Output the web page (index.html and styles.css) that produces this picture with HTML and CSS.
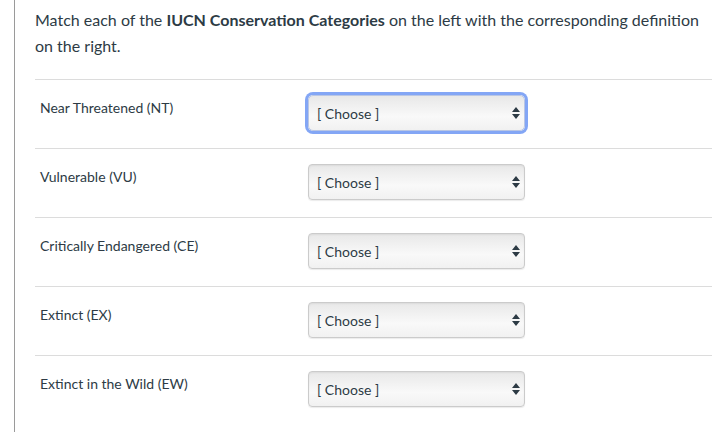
FILE: index.html
```html
<!DOCTYPE html>
<html lang="en">
<head>
    <meta charset="UTF-8">
    <meta name="viewport" content="width=device-width, initial-scale=1.0">
    <title>Quiz - Matching</title>
    <link rel="stylesheet" href="styles.css">
</head>
<body>

    <div class="question">
        <p class="question-text">Match each of the <strong>IUCN Conservation Categories</strong> on the left with the corresponding definition on the right.</p>

        <div class="answers">
            <div class="match-row">
                <div class="match-label">Near Threatened (NT)</div>
                <div class="select-wrap">
                    <select class="match-select is-focused">
                        <option>[ Choose ]</option>
                    </select>
                    <svg class="select-arrows" width="8" height="12" viewBox="0 0 8 12">
                        <path d="M4 0 L8 5 H0 Z M0 7 H8 L4 12 Z" fill="#2d3b45"/>
                    </svg>
                </div>
            </div>

            <div class="match-row">
                <div class="match-label">Vulnerable (VU)</div>
                <div class="select-wrap">
                    <select class="match-select">
                        <option>[ Choose ]</option>
                    </select>
                    <svg class="select-arrows" width="8" height="12" viewBox="0 0 8 12">
                        <path d="M4 0 L8 5 H0 Z M0 7 H8 L4 12 Z" fill="#2d3b45"/>
                    </svg>
                </div>
            </div>

            <div class="match-row">
                <div class="match-label">Critically Endangered (CE)</div>
                <div class="select-wrap">
                    <select class="match-select">
                        <option>[ Choose ]</option>
                    </select>
                    <svg class="select-arrows" width="8" height="12" viewBox="0 0 8 12">
                        <path d="M4 0 L8 5 H0 Z M0 7 H8 L4 12 Z" fill="#2d3b45"/>
                    </svg>
                </div>
            </div>

            <div class="match-row">
                <div class="match-label">Extinct (EX)</div>
                <div class="select-wrap">
                    <select class="match-select">
                        <option>[ Choose ]</option>
                    </select>
                    <svg class="select-arrows" width="8" height="12" viewBox="0 0 8 12">
                        <path d="M4 0 L8 5 H0 Z M0 7 H8 L4 12 Z" fill="#2d3b45"/>
                    </svg>
                </div>
            </div>

            <div class="match-row">
                <div class="match-label">Extinct in the Wild (EW)</div>
                <div class="select-wrap">
                    <select class="match-select">
                        <option>[ Choose ]</option>
                    </select>
                    <svg class="select-arrows" width="8" height="12" viewBox="0 0 8 12">
                        <path d="M4 0 L8 5 H0 Z M0 7 H8 L4 12 Z" fill="#2d3b45"/>
                    </svg>
                </div>
            </div>
        </div>
    </div>

</body>
</html>
```

FILE: styles.css
```css
:root {
    --text-dark: #2d3b45;
    --divider: #dcdcdc;
    --rail: #9a9a9a;
    --focus: #83a6f5;
}

* {
    box-sizing: border-box;
    margin: 0;
    padding: 0;
}

body {
    font-family: 'Lato', 'Open Sans', sans-serif;
    color: var(--text-dark);
    background: #ffffff;
    overflow: hidden;
}

.question {
    margin-left: 14px;
    border-left: 1px solid var(--rail);
    padding: 7px 3px 0 20px;
    min-height: 432px;
}

.question-text {
    font-size: 16px;
    line-height: 26px;
    padding-bottom: 20px;
    border-bottom: 1px solid var(--divider);
}

.question-text strong {
    font-weight: 700;
}

.match-row {
    display: flex;
    align-items: flex-start;
    padding: 0 0 17px 5px;
    border-bottom: 1px solid var(--divider);
}

.match-row:last-child {
    border-bottom: none;
}

.match-label {
    width: 268px;
    font-size: 14px;
    line-height: 20px;
    padding-top: 18px;
}

.select-wrap {
    position: relative;
    margin-top: 15px;
}

.match-select {
    appearance: none;
    -webkit-appearance: none;
    width: 217px;
    height: 36px;
    padding: 0 24px 0 8px;
    font-family: inherit;
    font-size: 14px;
    color: var(--text-dark);
    border: 1px solid #cbcbcb;
    border-radius: 4px;
    background: linear-gradient(#e8e8e8, #f9f9f9 60%, #f1f1f1);
    box-shadow: inset 0 1px 2px rgba(0, 0, 0, 0.06), 0 1px 1px rgba(0, 0, 0, 0.08);
    outline: none;
}

.match-select.is-focused {
    border-radius: 5px;
    box-shadow: 0 0 0 3px var(--focus);
    border-color: #b9c6e4;
}

.select-arrows {
    position: absolute;
    right: 5px;
    top: 12px;
    pointer-events: none;
}
```
